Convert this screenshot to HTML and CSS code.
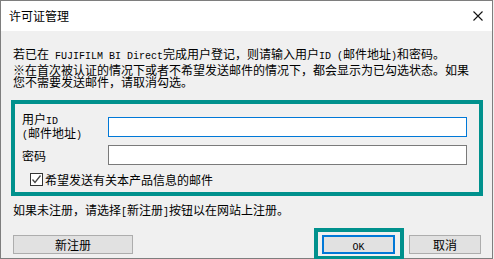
FILE: index.html
```html
<!DOCTYPE html>
<html lang="zh-CN">
<head>
<meta charset="utf-8">
<title>许可证管理</title>
<link rel="stylesheet" href="styles.css">
</head>
<body>
<div class="window">
  <div class="titlebar">
    <span class="title">许可证管理</span>
    <svg class="close" width="10" height="10" viewBox="0 0 10 10"><path d="M0.5 0.5 L9.5 9.5 M9.5 0.5 L0.5 9.5" stroke="#111" stroke-width="1.1" fill="none"/></svg>
  </div>
  <div class="content">
    <p class="para">若已在<span class="lat"> FUJIFILM BI Direct</span>完成用户登记，则请输入用户<span class="lat">ID (</span>邮件地址<span class="lat">)</span>和密码。</p>
    <p class="para para2">※在首次被认证的情况下或者不希望发送邮件的情况下，都会显示为已勾选状态。如果<br>您不需要发送邮件，请取消勾选。</p>
    <div class="group">
      <div class="field">
        <div class="label">用户<span class="lat">ID</span><br><span class="lat">(</span>邮件地址<span class="lat">)</span></div>
        <input class="input input-focus" type="text">
      </div>
      <div class="field field2">
        <div class="label">密码</div>
        <input class="input" type="password">
      </div>
      <div class="check-row">
        <span class="checkbox"><svg width="11" height="11" viewBox="0 0 11 11"><path d="M1.5 5.5 L4 8.5 L9.5 1.5" stroke="#444" stroke-width="1.3" fill="none"/></svg></span>
        <span class="check-label">希望发送有关本产品信息的邮件</span>
      </div>
    </div>
    <p class="note">如果未注册，请选择<span class="lat">[</span>新注册<span class="lat">]</span>按钮以在网站上注册。</p>
    <div class="buttons">
      <button class="btn btn-new">新注册</button>
      <div class="right-buttons">
        <button class="btn btn-ok"><span class="lat">OK</span></button>
        <button class="btn btn-cancel">取消</button>
      </div>
    </div>
  </div>
</div>
</body>
</html>
```
FILE: styles.css
```css
html, body {
  margin: 0;
  padding: 0;
  background: #f0f0f0;
}
body {
  font-family: "Noto Sans CJK SC", "Noto Sans", sans-serif;
  font-size: 12px;
  color: #000;
}
.lat {
  font-family: "Liberation Mono", "DejaVu Sans Mono", monospace;
  font-size: 10px;
}
.window {
  width: 493px;
  height: 259px;
  box-sizing: border-box;
  border: 1px solid #7e7e7e;
  background: #f0f0f0;
}
.titlebar {
  height: 30px;
  background: #fff;
  display: flex;
  align-items: center;
  justify-content: space-between;
  padding: 0 9px 0 8px;
}
.title {
  font-size: 12px;
  line-height: 14px;
}
.close {
  display: block;
}
.content {
  padding: 17px 11px 0 12px;
}
.para {
  margin: 0;
  line-height: 12px;
  white-space: nowrap;
}
.para2 {
  margin-top: 1px;
}
.group {
  margin-top: 12px;
  margin-left: -2px;
  width: 472px;
  box-sizing: border-box;
  border: 4px solid #00918d;
  padding: 13px 12px 6px 7px;
}
.field {
  display: flex;
  align-items: center;
  height: 20px;
}
.field2 {
  margin-top: 8px;
}
.label {
  width: 86px;
  line-height: 11px;
  white-space: nowrap;
}
.input {
  width: 359px;
  height: 20px;
  box-sizing: border-box;
  border: 1px solid #7a7a7a;
  background: #fff;
  margin: 0;
  padding: 0 2px;
  outline: none;
}
.input-focus {
  border-color: #0078d7;
}
.check-row {
  margin-top: 8px;
  height: 13px;
  display: flex;
  align-items: center;
  padding-left: 8px;
}
.checkbox {
  width: 13px;
  height: 13px;
  box-sizing: border-box;
  border: 1px solid #333;
  background: #fff;
  display: flex;
  align-items: center;
  justify-content: center;
}
.checkbox svg {
  display: block;
}
.check-label {
  margin-left: 2px;
  line-height: 13px;
  white-space: nowrap;
}
.note {
  margin: 8px 0 0 0;
  line-height: 12px;
  white-space: nowrap;
}
.buttons {
  margin-top: 16px;
  display: flex;
  justify-content: space-between;
}
.right-buttons {
  display: flex;
  gap: 14px;
}
.btn {
  height: 19px;
  box-sizing: border-box;
  background: #e1e1e1;
  border: 1px solid #adadad;
  font-family: "Noto Sans CJK SC", "Noto Sans", sans-serif;
  font-size: 12px;
  line-height: 15px;
  padding: 0;
  margin: 0;
  color: #000;
}
.btn-new {
  width: 120px;
}
.btn-ok {
  width: 73px;
  border: 2px solid #0078d7;
  position: relative;
}
.btn-ok::after {
  content: "";
  position: absolute;
  top: -9px;
  left: -10px;
  right: -11px;
  bottom: -8px;
  border: 4px solid #00918d;
}
.btn-cancel {
  width: 72px;
}
```
